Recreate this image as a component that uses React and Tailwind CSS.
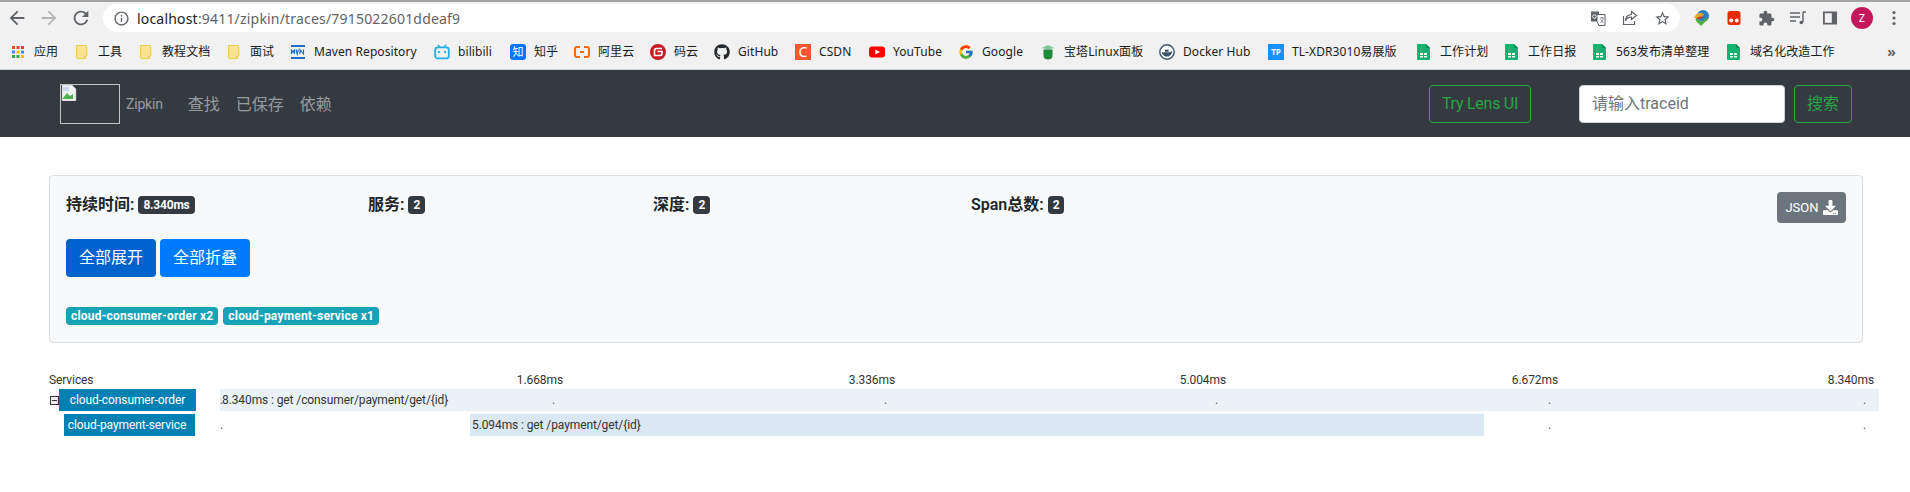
import React from "react";
import { FaGithub, FaDownload } from "react-icons/fa";
import { FcGoogle } from "react-icons/fc";

const Folder = () => (
  <svg width="16" height="16" viewBox="0 0 16 16">
    <path d="M2.5 1.5h9.5c.5 0 .8.3.8.8v9.7l-2 2.5H3c-.3 0-.5-.2-.5-.5z" fill="#fde293" stroke="#f2c94c" strokeWidth="1" />
    <path d="M10.5 14.5v-2.5h2.5" fill="none" stroke="#f2c94c" />
  </svg>
);
const Sheet = () => (
  <svg width="16" height="16" viewBox="0 0 16 16">
    <path d="M2 0h8l4 4v11a1 1 0 0 1-1 1H2a1 1 0 0 1-1-1V1a1 1 0 0 1 1-1z" fill="#12b26f" />
    <path d="M10 0l4 4h-4z" fill="#0c8a55" />
    <path d="M4 9h3v2H4zM8 9h3v2H8zM4 12h3v1.5H4zM8 12h3v1.5H8z" fill="#fff" />
  </svg>
);
const Apps = () => (
  <svg width="16" height="16" viewBox="0 0 16 16">
    <rect x="2" y="2" width="3" height="3" fill="#ea4335" /><rect x="6.5" y="2" width="3" height="3" fill="#ea4335" /><rect x="11" y="2" width="3" height="3" fill="#ea4335" />
    <rect x="2" y="6.5" width="3" height="3" fill="#4285f4" /><rect x="6.5" y="6.5" width="3" height="3" fill="#fbbc04" /><rect x="11" y="6.5" width="3" height="3" fill="#4285f4" />
    <rect x="2" y="11" width="3" height="3" fill="#34a853" /><rect x="6.5" y="11" width="3" height="3" fill="#34a853" /><rect x="11" y="11" width="3" height="3" fill="#fbbc04" />
  </svg>
);
const Mvn = () => (
  <svg width="16" height="16" viewBox="0 0 16 16">
    <rect x="1" y="1" width="14" height="2" fill="#1f6fc4" />
    <rect x="1" y="13" width="14" height="2" fill="#1f6fc4" />
    <path d="M1.5 10V5.5l1.5 3 1.5-3V10M6 5.5l1.2 4.5 1.2-4.5M10 10V5.5l3.5 4.5V5.5" fill="none" stroke="#1f6fc4" strokeWidth="1.1" />
  </svg>
);
const Bili = () => (
  <svg width="16" height="16" viewBox="0 0 16 16">
    <path d="M4 .8l2 2.4M12 .8l-2 2.4" stroke="#20b0e3" strokeWidth="1.4" />
    <rect x="1.2" y="3.4" width="13.6" height="11" rx="2.5" fill="none" stroke="#20b0e3" strokeWidth="1.8" />
    <rect x="4" y="7" width="1.8" height="2" fill="#20b0e3" /><rect x="10.2" y="7" width="1.8" height="2" fill="#20b0e3" />
  </svg>
);
const Zhi = () => (
  <span className="flex h-4 w-4 items-center justify-center rounded-[3px] bg-[#0a74ff] text-[11px] leading-none text-white">知</span>
);
const Ali = () => (
  <svg width="16" height="16" viewBox="0 0 16 16" fill="none" stroke="#ff6a00" strokeWidth="2">
    <path d="M6 3H3a2 2 0 0 0-2 2v6a2 2 0 0 0 2 2h3M10 3h3a2 2 0 0 1 2 2v6a2 2 0 0 1-2 2h-3M6 8h4" />
  </svg>
);
const Gitee = () => (
  <svg width="16" height="16" viewBox="0 0 16 16">
    <circle cx="8" cy="8" r="8" fill="#c71d23" />
    <path d="M12 4.5H6.5a2 2 0 0 0-2 2v5h5.5a2 2 0 0 0 2-2V7.5H7.5" fill="none" stroke="#fff" strokeWidth="1.6" />
  </svg>
);
const Csdn = () => (
  <span className="flex h-4 w-4 items-center justify-center bg-[#fc5531] text-[14px] leading-none text-white">C</span>
);
const Yt = () => (
  <svg width="16" height="16" viewBox="0 0 16 16">
    <rect x="0" y="2.5" width="16" height="11" rx="3" fill="#ff0000" />
    <path d="M6.3 5.5v5L11 8z" fill="#fff" />
  </svg>
);
const Bt = () => (
  <svg width="16" height="16" viewBox="0 0 16 16">
    <path d="M2 4L8 1l6 3-6 1.5z" fill="#6fb98a" />
    <path d="M3.5 5.5h9V12c0 2-2 3.5-4.5 3.5S3.5 14 3.5 12z" fill="#1f8a3a" />
    <path d="M8 1v4M5 2v3M11 2v3" stroke="#d5ead9" strokeWidth=".6" />
  </svg>
);
const Docker = () => (
  <svg width="16" height="16" viewBox="0 0 16 16">
    <circle cx="8" cy="8" r="7.2" fill="#fff" stroke="#3c5568" strokeWidth="1.4" />
    <path d="M2.8 8.2h8.5c.5-.8 1.2-1 2-.8-.4 3-2.8 5-5.6 5-2.6 0-4.5-1.6-4.9-4.2z" fill="#3c5568" />
    <rect x="6" y="5.6" width="3.6" height="2.2" fill="#3c5568" />
  </svg>
);
const Tp = () => (
  <span className="flex h-4 w-4 items-center justify-center bg-[#1890ff] text-[8px] font-bold leading-none text-white">TP</span>
);

const bookmarks = [
  { icon: <Apps />, label: "应用", w: "w-[24px]" },
  { icon: <Folder />, label: "工具", w: "w-[24px]" },
  { icon: <Folder />, label: "教程文档", w: "w-[48px]" },
  { icon: <Folder />, label: "面试", w: "w-[24px]" },
  { icon: <Mvn />, label: "Maven Repository", w: "w-[104px]" },
  { icon: <Bili />, label: "bilibili", w: "w-[36px]" },
  { icon: <Zhi />, label: "知乎", w: "w-[24px]" },
  { icon: <Ali />, label: "阿里云", w: "w-[36px]" },
  { icon: <Gitee />, label: "码云", w: "w-[24px]" },
  { icon: <FaGithub size={16} color="#24292e" />, label: "GitHub", w: "w-[41px]" },
  { icon: <Csdn />, label: "CSDN", w: "w-[34px]" },
  { icon: <Yt />, label: "YouTube", w: "w-[49px]" },
  { icon: <FcGoogle size={16} />, label: "Google", w: "w-[42px]" },
  { icon: <Bt />, label: "宝塔Linux面板", w: "w-[79px]" },
  { icon: <Docker />, label: "Docker Hub", w: "w-[69px]" },
  { icon: <Tp />, label: "TL-XDR3010易展版", w: "w-[108px]" },
  { icon: <Sheet />, label: "工作计划", w: "w-[48px]" },
  { icon: <Sheet />, label: "工作日报", w: "w-[48px]" },
  { icon: <Sheet />, label: "563发布清单整理", w: "w-[94px]" },
  { icon: <Sheet />, label: "域名化改造工作", w: "w-[84px]" },
];

const ToolIcon = ({ children }) => (
  <span className="flex h-8 w-8 flex-none items-center justify-center">{children}</span>
);

const M = ({ d, color = "#5f6368", size = 20 }) => (
  <svg width={size} height={size} viewBox="0 0 24 24" fill={color}><path d={d} /></svg>
);

function Toolbar() {
  return (
    <div className="flex h-[34px] flex-none items-center border-t-2 border-[#a3a3a3] bg-[#f1f1f1] pl-px font-['Noto_Sans','Noto_Sans_CJK_SC',sans-serif]">
      <ToolIcon><M size={22} d="M20 11H7.83l5.59-5.59L12 4l-8 8 8 8 1.41-1.41L7.83 13H20v-2z" /></ToolIcon>
      <ToolIcon><M size={22} color="#b3b5b7" d="M4 11h12.17l-5.59-5.59L12 4l8 8-8 8-1.41-1.41L16.17 13H4v-2z" /></ToolIcon>
      <ToolIcon><M size={22} d="M17.65 6.35C16.2 4.9 14.21 4 12 4c-4.42 0-7.99 3.58-7.99 8s3.57 8 7.99 8c3.73 0 6.84-2.55 7.73-6h-2.08c-.82 2.33-3.04 4-5.65 4-3.31 0-6-2.69-6-6s2.69-6 6-6c1.66 0 3.14.69 4.22 1.78L13 11h7V4l-2.35 2.35z" /></ToolIcon>
      <div className="ml-[6px] flex h-[28px] flex-1 items-center rounded-full bg-white pl-[10px] pr-[2px]">
        <M size={17} d="M11 7h2v2h-2zm0 4h2v6h-2zm1-9C6.48 2 2 6.48 2 12s4.48 10 10 10 10-4.48 10-10S17.52 2 12 2zm0 18c-4.41 0-8-3.59-8-8s3.59-8 8-8 8 3.59 8 8-3.59 8-8 8z" />
        <span className="ml-[7px] flex-1 whitespace-nowrap text-[14px] tracking-[0.19px] text-[#5f6368]">
          <span className="text-[#202124]">localhost</span>:9411/zipkin/traces/7915022601ddeaf9
        </span>
        <ToolIcon>
          <svg width="16" height="16" viewBox="0 0 16 16">
            <path d="M1 1.5h8v10H1z" fill="#5f6368" />
            <path d="M7 4.5h8v11H9l-2-4z" fill="#fff" stroke="#5f6368" />
            <circle cx="4.5" cy="6.5" r="1.8" fill="none" stroke="#fff" strokeWidth=".9" />
            <path d="M10 8h4M12 7v1.5M10.5 13l3-4M10.5 9.5l3 3.5" stroke="#5f6368" strokeWidth=".7" />
          </svg>
        </ToolIcon>
        <ToolIcon>
          <svg width="16" height="16" viewBox="0 0 16 16" fill="none" stroke="#5f6368" strokeWidth="1.2">
            <path d="M1.5 6v8.5h11V11M9.5 1.5l5 4-5 4V7C6.5 7 4.5 8.5 3.5 11c0-4 2.5-6.5 6-6.5z" />
          </svg>
        </ToolIcon>
        <ToolIcon>
          <M size={17} d="M22 9.24l-7.19-.62L12 2 9.19 8.63 2 9.24l5.46 4.73L5.82 21 12 17.27 18.18 21l-1.63-7.03L22 9.24zM12 15.4l-3.76 2.27 1-4.28-3.32-2.88 4.38-.38L12 6.1l1.71 4.04 4.38.38-3.32 2.88 1 4.28L12 15.4z" />
        </ToolIcon>
      </div>
      <div className="ml-[6px] flex flex-none">
        <ToolIcon>
          <svg width="18" height="18" viewBox="0 0 18 18">
            <circle cx="10" cy="7" r="6" fill="#2d7fc1" />
            <path d="M1 9c2-5 6-6 10-4l-3 4z" fill="#e2a52b" />
            <path d="M2 11c3-4 6-4 9-3l-4 2z" fill="#c0392b" />
            <path d="M3 12l5 5 8-8-4 1-4 3-5-4z" fill="#4caf3a" />
          </svg>
        </ToolIcon>
        <ToolIcon>
          <svg width="16" height="16" viewBox="0 0 16 16">
            <rect x="1.5" y="1" width="13" height="14" rx="2.5" fill="#e62b00" />
            <circle cx="5.3" cy="10.5" r="2" fill="#fff" /><circle cx="10.7" cy="10.5" r="2" fill="#fff" />
          </svg>
        </ToolIcon>
        <ToolIcon>
          <M size={17} d="M20.5 11H19V7c0-1.1-.9-2-2-2h-4V3.5C13 2.12 11.88 1 10.5 1S8 2.12 8 3.5V5H4c-1.1 0-1.99.9-1.99 2v3.8H3.5c1.49 0 2.7 1.21 2.7 2.7s-1.21 2.7-2.7 2.7H2V20c0 1.1.9 2 2 2h3.8v-1.5c0-1.49 1.21-2.7 2.7-2.7 1.49 0 2.7 1.21 2.7 2.7V22H17c1.1 0 2-.9 2-2v-4h1.5c1.38 0 2.5-1.12 2.5-2.5S21.88 11 20.5 11z" />
        </ToolIcon>
        <ToolIcon>
          <svg width="18" height="18" viewBox="0 0 18 18" fill="none" stroke="#5f6368" strokeWidth="1.4">
            <path d="M1 4h10M1 8h10M1 12h6M14 3v10" />
            <circle cx="12.3" cy="13.5" r="1.8" fill="#5f6368" stroke="none" />
            <path d="M14 3h3" />
          </svg>
        </ToolIcon>
        <ToolIcon>
          <svg width="16" height="16" viewBox="0 0 16 16">
            <rect x="1" y="1.5" width="14" height="13" fill="#5f6368" />
            <rect x="2.8" y="3.2" width="7" height="9.6" fill="#f1f1f1" />
          </svg>
        </ToolIcon>
        <ToolIcon>
          <span className="flex h-[22px] w-[22px] items-center justify-center rounded-full bg-[#c2185b] text-[11px] text-white">Z</span>
        </ToolIcon>
        <ToolIcon>
          <svg width="4" height="16" viewBox="0 0 4 16" fill="#5f6368">
            <circle cx="2" cy="2.5" r="1.6" /><circle cx="2" cy="8" r="1.6" /><circle cx="2" cy="13.5" r="1.6" />
          </svg>
        </ToolIcon>
      </div>
    </div>
  );
}

function Bookmarks() {
  return (
    <div className="flex h-[36px] flex-none items-center gap-4 border-b border-[#d0d2d4] bg-[#f1f1f1] pl-[10px] pr-[14px] font-['Noto_Sans','Noto_Sans_CJK_SC',sans-serif] text-[12px] tracking-[0.08px] text-[#1a1a1a]">
      {bookmarks.map((b) => (
        <div key={b.label + b.w} className="flex flex-none items-center gap-2">
          <span className="flex h-4 w-4 flex-none items-center justify-center">{b.icon}</span>
          <span className={"whitespace-nowrap " + b.w}>{b.label}</span>
        </div>
      ))}
      <span className="ml-auto text-[14px] font-bold leading-none text-[#5f6368]">»</span>
    </div>
  );
}

function Navbar() {
  return (
    <nav className="flex h-[67px] flex-none items-center bg-[#343a40] pl-[60px] pr-[58px] text-[#999c9f]">
      <div className="h-[40px] w-[60px] flex-none border border-[#c4c4c4]">
        <svg width="16" height="16" viewBox="0 0 16 16">
          <path d="M1 0h10l4 4v12H1z" fill="#f1f1f1" stroke="#aaa" strokeWidth=".5" />
          <path d="M2 13l4-5 3 3 3-2v5H2z" fill="#4caf50" />
          <path d="M2 2h6v4H2z" fill="#c8d9ee" />
        </svg>
      </div>
      <span className="ml-[6px] mt-[2px] text-[14px] tracking-[-0.2px]">Zipkin</span>
      <span className="ml-[25px] mt-[2px] text-[16px]">查找</span>
      <span className="ml-[16px] mt-[2px] text-[16px]">已保存</span>
      <span className="ml-[16px] mt-[2px] text-[16px]">依赖</span>
      <button className="ml-auto h-[38px] w-[102px] rounded border border-[#28a745] text-[16px] tracking-[-0.25px] text-[#28a745]">Try Lens UI</button>
      <input
        className="ml-[48px] h-[38px] w-[206px] rounded border border-[#ced4da] bg-white px-3 text-[16px] text-[#495057] placeholder:text-[#6c757d]"
        placeholder="请输入traceid"
      />
      <button className="ml-[9px] h-[38px] w-[58px] rounded border border-[#28a745] text-[16px] text-[#28a745]">搜索</button>
    </nav>
  );
}

const Stat = ({ label, value, w }) => (
  <div className={"flex flex-none items-center gap-[4px] " + w}>
    <span className="text-[16px] font-semibold leading-none text-[#212529]">{label}</span>
    <span className="rounded bg-[#343a40] px-[5px] text-[12px] font-bold leading-[18px] tracking-[-0.2px] text-white">{value}</span>
  </div>
);

function Panel() {
  return (
    <section className="ml-[49px] mt-[38px] h-[168px] w-[1814px] flex-none rounded border border-[#dcdee0] bg-[#f8f9fa] px-4 pt-[20px]">
      <div className="flex h-[18px]">
        <Stat label="持续时间:" value="8.340ms" w="w-[302px]" />
        <Stat label="服务:" value="2" w="w-[285px]" />
        <Stat label="深度:" value="2" w="w-[318px]" />
        <Stat label="Span总数:" value="2" w="" />
        <button className="ml-auto -mt-[4px] flex h-[31px] w-[69px] items-center justify-center gap-[4px] self-start rounded bg-[#6c757d] text-[13px] text-white">
          JSON <FaDownload size={15} />
        </button>
      </div>
      <div className="mt-[25px] flex gap-1">
        <button className="h-[38px] w-[90px] rounded bg-[#0062cc] text-[16px] text-white">全部展开</button>
        <button className="h-[38px] w-[90px] rounded bg-[#007bff] text-[16px] text-white">全部折叠</button>
      </div>
      <div className="mt-[30px] flex gap-[5px]">
        <span className="rounded bg-[#17a2b8] px-[5px] text-[12px] font-bold leading-[18px] tracking-[0.2px] text-white">cloud-consumer-order x2</span>
        <span className="rounded bg-[#17a2b8] px-[5px] text-[12px] font-bold leading-[18px] tracking-[0.2px] text-white">cloud-payment-service x1</span>
      </div>
    </section>
  );
}

const Dots = () => (
  <div className="flex h-full text-[12px] leading-[22px] text-[#555]">
    <span className="w-[332px] flex-none">.</span>
    <span className="w-[332px] flex-none">.</span>
    <span className="w-[331px] flex-none">.</span>
    <span className="w-[333px] flex-none">.</span>
    <span className="w-[315px] flex-none">.</span>
    <span className="flex-none">.</span>
  </div>
);

function Trace() {
  return (
    <section className="mt-[29px] flex flex-none flex-col pr-[31px] text-[12px] tracking-[-0.1px] text-[#333]">
      <div className="flex h-[17px] items-center pb-[2px] pl-[49px]">
        <span className="w-[171px] flex-none">Services</span>
        <span className="w-[343px] flex-none text-right">1.668ms</span>
        <span className="w-[332px] flex-none text-right">3.336ms</span>
        <span className="w-[331px] flex-none text-right">5.004ms</span>
        <span className="w-[332px] flex-none text-right">6.672ms</span>
        <span className="w-[316px] flex-none text-right">8.340ms</span>
      </div>
      <div className="flex h-[22px]">
        <div className="flex w-[220px] flex-none items-center pl-[50px]">
          <span className="flex h-[9px] w-[9px] flex-none items-center justify-center border border-[#333] bg-[#eee]">
            <span className="h-px w-[5px] bg-[#333]" />
          </span>
          <span className="flex h-[22px] w-[137px] flex-none items-center justify-center bg-[#0080b3] text-[12px] text-white">cloud-consumer-order</span>
        </div>
        <div className="relative flex-1 bg-[#eaf2f8]">
          <Dots />
          <span className="absolute left-[2px] top-0 leading-[22px]">8.340ms : get /consumer/payment/get/{"{id}"}</span>
        </div>
      </div>
      <div className="mt-[3px] flex h-[22px]">
        <div className="flex w-[220px] flex-none items-center pl-[64px]">
          <span className="flex h-[22px] w-[131px] flex-none items-center justify-center bg-[#0080b3] pr-[5px] text-[12px] text-white">cloud-payment-service</span>
        </div>
        <div className="relative flex-1">
          <Dots />
          <span className="absolute left-[250px] top-0 h-[22px] w-[1014px] bg-[#d9e8f2] pl-[2px] leading-[22px]">5.094ms : get /payment/get/{"{id}"}</span>
        </div>
      </div>
    </section>
  );
}

export default function App() {
  return (
    <div className="flex h-[492px] w-full flex-col overflow-hidden bg-white font-['Roboto','Noto_Sans_CJK_SC',sans-serif]">
      <Toolbar />
      <Bookmarks />
      <Navbar />
      <Panel />
      <Trace />
    </div>
  );
}
